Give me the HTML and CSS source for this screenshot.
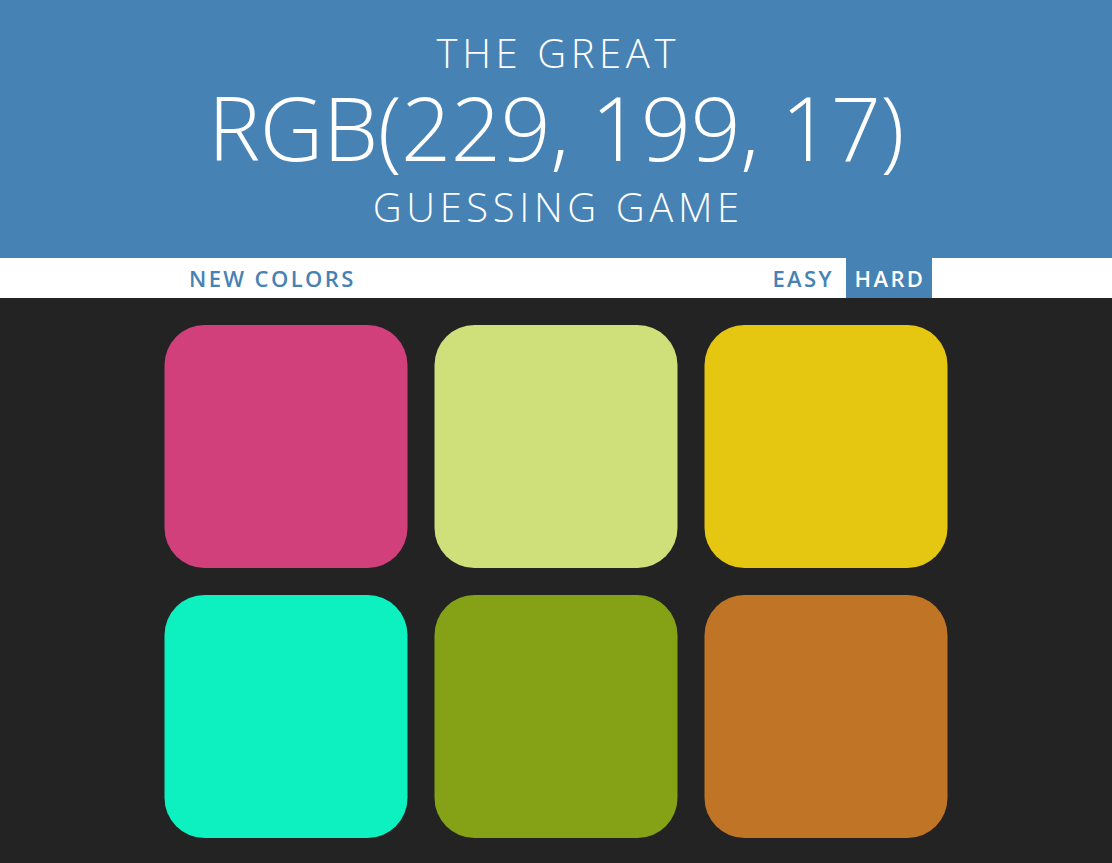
FILE: index.html
```html
<!DOCTYPE html>
<html lang="en">
<head>
<meta charset="utf-8">
<title>Color Game</title>
<link rel="stylesheet" href="styles.css">
</head>
<body>
<header class="hero">
  <div class="hero-line small">THE GREAT</div>
  <div class="hero-line big">RGB(229, 199, 17)</div>
  <div class="hero-line small">GUESSING GAME</div>
</header>
<nav class="stripe">
  <div class="stripe-inner">
    <button class="btn">NEW COLORS</button>
    <span class="msg"></span>
    <div class="modes">
      <button class="btn">EASY</button>
      <button class="btn selected">HARD</button>
    </div>
  </div>
</nav>
<main class="board">
  <div class="square sq1"></div>
  <div class="square sq2"></div>
  <div class="square sq3"></div>
  <div class="square sq4"></div>
  <div class="square sq5"></div>
  <div class="square sq6"></div>
</main>
</body>
</html>
```
FILE: styles.css
```css
* { box-sizing: border-box; }
html, body { margin: 0; padding: 0; }
body {
  background: #232323;
  font-family: "Open Sans", "DejaVu Sans", sans-serif;
}
.hero {
  background: #4682b4;
  color: #fff;
  text-align: center;
  height: 258px;
  padding-top: 33px;
  font-weight: 300;
}
.hero-line { line-height: 1; }
.hero-line.small {
  font-size: 40px;
  letter-spacing: 4.6px;
  padding-left: 4.6px;
}
.hero-line.big {
  font-size: 88px;
  margin: 10px 0 16px;
  letter-spacing: -0.5px;
}
.stripe {
  background: #fff;
  height: 40px;
}
.stripe-inner {
  width: 752px;
  margin: 0 auto;
  height: 100%;
  display: flex;
  justify-content: space-between;
  align-items: stretch;
}
.modes { display: flex; gap: 5px; }
.btn {
  border: none;
  background: #fff;
  color: #4682b4;
  font-family: "Open Sans", "DejaVu Sans", sans-serif;
  font-weight: 600;
  font-size: 22px;
  padding: 0 6.6px 0 9px;
  height: 40px;
  letter-spacing: 2.4px;
  cursor: pointer;
}
.btn.selected {
  background: #4682b4;
  color: #fff;
}
.board {
  width: 810px;
  margin: 0 auto;
  padding: 13.5px 0;
  display: flex;
  flex-wrap: wrap;
  transform: translateX(-0.5px);
}
.square {
  width: 243px;
  height: 243px;
  margin: 13.5px;
  border-radius: 40px;
}
.sq1 { background: rgb(210, 64, 124); }
.sq2 { background: rgb(207, 223, 122); }
.sq3 { background: rgb(229, 199, 17); }
.sq4 { background: rgb(13, 240, 192); }
.sq5 { background: rgb(133, 162, 23); }
.sq6 { background: rgb(192, 116, 38); }
```
